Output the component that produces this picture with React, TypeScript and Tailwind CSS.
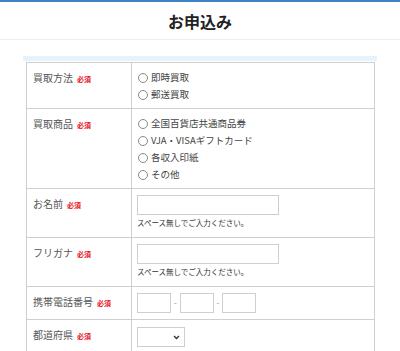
const labelRows = [
    { label: "買取方法", options: ["即時買取", "郵送買取"] },
    { label: "買取商品", options: ["全国百貨店共通商品券", "VJA・VISAギフトカード", "各収入印紙", "その他"] },
];

function Required() {
    return <span className="ml-[4px] text-[7px] font-bold text-[#e8101c] align-middle">必須</span>;
}

function Label({ text }: { text: string }) {
    return (
        <div className="w-[105px] shrink-0 border-r border-[#cfcfcf] pl-[6px] pt-[8px] text-[10px] leading-[14px] text-[#555]">
            {text}
            <Required />
        </div>
    );
}

function Radio({ text }: { text: string }) {
    return (
        <div className="flex items-center h-[17px] text-[9.5px] text-[#444]">
            <span className="mr-[3px] inline-block h-[10px] w-[10px] rounded-full border border-[#888] bg-white" />
            {text}
        </div>
    );
}

function TextBox({ className }: { className: string }) {
    return <div className={`h-[20px] border border-[#cfcfcf] bg-white ${className}`} />;
}

export default function App() {
    return (
        <div className="w-[400px] h-[351px] overflow-hidden bg-white" style={{ fontFamily: '"Noto Sans CJK JP", "Noto Sans", sans-serif' }}>
            <div className="h-[2px] bg-[#3d82c7]" />
            <div className="flex h-[38px] items-center justify-center border-b border-[#eeeeee]">
                <h1 className="text-[16px] font-bold text-[#222]">お申込み</h1>
            </div>

            <div className="px-[23px] pt-[16px]">
                <div className="h-[5px] bg-[#e7f3fc]" />
                <div className="mt-[1px] ml-[3px] mr-[2px] border border-[#cfcfcf]">
                    {labelRows.map((row) => (
                        <div key={row.label} className="flex border-b border-[#cfcfcf]">
                            <Label text={row.label} />
                            <div className="pl-[6px] pt-[6px] pb-[5px]">
                                {row.options.map((opt) => (
                                    <Radio key={opt} text={opt} />
                                ))}
                            </div>
                        </div>
                    ))}

                    {["お名前", "フリガナ"].map((label) => (
                        <div key={label} className="flex border-b border-[#cfcfcf]">
                            <Label text={label} />
                            <div className="pl-[5px] pt-[6px] pb-[8px]">
                                <TextBox className="w-[142px]" />
                                <p className="mt-[2px] text-[7.5px] leading-[12px] text-[#333]">スペース無しでご入力ください。</p>
                            </div>
                        </div>
                    ))}

                    <div className="flex border-b border-[#cfcfcf]">
                        <Label text="携帯電話番号" />
                        <div className="flex items-center pl-[5px] py-[6px] text-[8px] text-[#888]">
                            <TextBox className="w-[34px]" />
                            <span className="w-[9px] text-center">-</span>
                            <TextBox className="w-[34px]" />
                            <span className="w-[8px] text-center">-</span>
                            <TextBox className="w-[34px]" />
                        </div>
                    </div>

                    <div className="flex h-[40px]">
                        <Label text="都道府県" />
                        <div className="pl-[5px] pt-[7px]">
                            <div className="flex h-[20px] w-[48px] items-center justify-end border border-[#cfcfcf] bg-white pr-[4px]">
                                <svg width="7" height="5" viewBox="0 0 7 5">
                                    <path d="M1 1l2.5 2.5L6 1" stroke="#333" strokeWidth="1.4" fill="none" />
                                </svg>
                            </div>
                        </div>
                    </div>
                </div>
            </div>
        </div>
    );
}
